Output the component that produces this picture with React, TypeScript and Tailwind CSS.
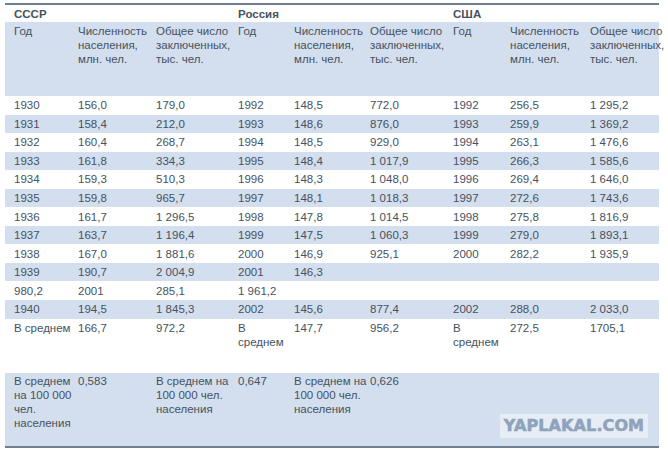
import React from "react";

type Row = { cells: string[]; blue: boolean };

const rows: Row[] = [
  { cells: ["1930", "156,0", "179,0", "1992", "148,5", "772,0", "1992", "256,5", "1 295,2"], blue: false },
  { cells: ["1931", "158,4", "212,0", "1993", "148,6", "876,0", "1993", "259,9", "1 369,2"], blue: true },
  { cells: ["1932", "160,4", "268,7", "1994", "148,5", "929,0", "1994", "263,1", "1 476,6"], blue: false },
  { cells: ["1933", "161,8", "334,3", "1995", "148,4", "1 017,9", "1995", "266,3", "1 585,6"], blue: true },
  { cells: ["1934", "159,3", "510,3", "1996", "148,3", "1 048,0", "1996", "269,4", "1 646,0"], blue: false },
  { cells: ["1935", "159,8", "965,7", "1997", "148,1", "1 018,3", "1997", "272,6", "1 743,6"], blue: true },
  { cells: ["1936", "161,7", "1 296,5", "1998", "147,8", "1 014,5", "1998", "275,8", "1 816,9"], blue: false },
  { cells: ["1937", "163,7", "1 196,4", "1999", "147,5", "1 060,3", "1999", "279,0", "1 893,1"], blue: true },
  { cells: ["1938", "167,0", "1 881,6", "2000", "146,9", "925,1", "2000", "282,2", "1 935,9"], blue: false },
  { cells: ["1939", "190,7", "2 004,9", "2001", "146,3", "", "", "", ""], blue: true },
  { cells: ["980,2", "2001", "285,1", "1 961,2", "", "", "", "", ""], blue: false },
  { cells: ["1940", "194,5", "1 845,3", "2002", "145,6", "877,4", "2002", "288,0", "2 033,0"], blue: true },
];

const widths = ["w-[64px]", "w-[78px]", "w-[82px]", "w-[56px]", "w-[76px]", "w-[83px]", "w-[57px]", "w-[80px]", "w-[78px]"];

const headCols = [
  ["Год"],
  ["Численность", "населения,", "млн. чел."],
  ["Общее число", "заключенных,", "тыс. чел."],
];

function Lines({ lines }: { lines: string[] }) {
  return (
    <>
      {lines.map((l, i) => (
        <div key={i} className="whitespace-nowrap">{l}</div>
      ))}
    </>
  );
}

export default function App() {
  return (
    <div
      className="relative h-[455px] w-[668px] bg-white pl-[5px] pt-[3px] text-[11.5px] text-[#46525f]"
      style={{ fontFamily: '"Liberation Sans", Arial, sans-serif' }}
    >
      <table className="w-[654px] table-fixed border-collapse border-y-2 border-[#6d8092]">
        <colgroup>
          {widths.map((w, i) => (
            <col key={i} className={w} />
          ))}
        </colgroup>
        <tbody>
          <tr className="h-[18px] font-bold">
            <td colSpan={3} className="pl-[9px] align-middle leading-[14px]">СССР</td>
            <td colSpan={3} className="pl-[9px] align-middle leading-[14px]">Россия</td>
            <td colSpan={3} className="pl-[9px] align-middle leading-[14px]">США</td>
          </tr>
          <tr className="h-[74px] bg-[#d3deee]">
            {[0, 1, 2].flatMap((g) =>
              headCols.map((lines, i) => (
                <td key={`${g}-${i}`} className="pl-[9px] pt-[2px] align-top leading-[14px]">
                  <Lines lines={lines} />
                </td>
              ))
            )}
          </tr>
          {rows.map((r, ri) => (
            <tr key={ri} className={`h-[18.55px] ${r.blue ? "bg-[#d3deee]" : ""}`}>
              {r.cells.map((c, ci) => (
                <td key={ci} className="whitespace-nowrap pl-[9px] align-middle leading-[14px]">
                  {c}
                </td>
              ))}
            </tr>
          ))}
          <tr className="h-[32px]">
            {[
              ["В среднем"], ["166,7"], ["972,2"],
              ["В", "среднем"], ["147,7"], ["956,2"],
              ["В", "среднем"], ["272,5"], ["1705,1"],
            ].map((lines, ci) => (
              <td key={ci} className="pl-[9px] pt-[2px] align-top leading-[14px]">
                <Lines lines={lines} />
              </td>
            ))}
          </tr>
          <tr className="h-[22px]">
            <td colSpan={9} />
          </tr>
          <tr className="h-[74px] bg-[#d3deee]">
            {[
              ["В среднем", "на 100 000", "чел.", "населения"], ["0,583"],
              ["В среднем на", "100 000 чел.", "населения"], ["0,647"],
              ["В среднем на", "100 000 чел.", "населения"], ["0,626"],
              [], [], [],
            ].map((lines, ci) => (
              <td key={ci} className="pl-[9px] pt-[1px] align-top leading-[14px]">
                <Lines lines={lines} />
              </td>
            ))}
          </tr>
        </tbody>
      </table>
      <div
        className="absolute left-[500px] top-[414px] flex h-[24px] w-[148px] items-center justify-center bg-[#e7edf5] text-[16px] font-bold tracking-[0.1px] text-[#8ea3bc]"
        style={{ fontFamily: '"DejaVu Sans", Verdana, sans-serif', WebkitTextStroke: "0.6px #8ea3bc" }}
      >
        YAPLAKAL.COM
      </div>
    </div>
  );
}
